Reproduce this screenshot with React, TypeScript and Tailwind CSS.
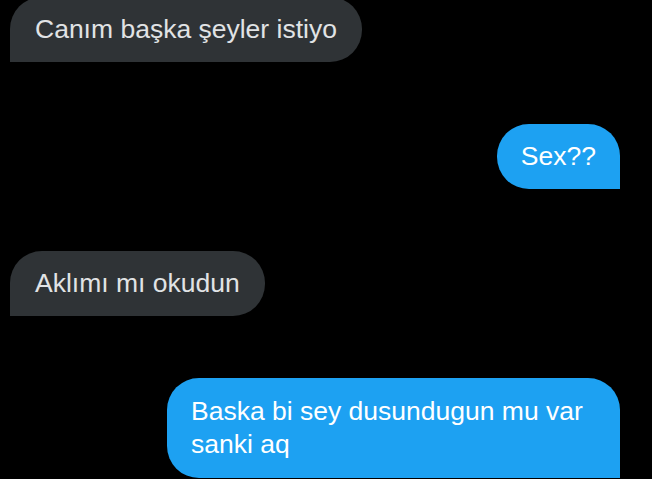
const messages = [
  { text: "Canım başka şeyler istiyo", mine: false },
  { text: "Sex??", mine: true },
  { text: "Aklımı mı okudun", mine: false },
  { text: "Baska bi sey dusundugun mu var sanki aq", mine: true, tall: true },
];

function Bubble({ text, mine, tall }: { text: string; mine: boolean; tall?: boolean }) {
  const pad = tall ? "py-[17px]" : "py-[16px]";
  return (
    <div
      className={
        mine
          ? `self-end max-w-[453px] rounded-[32px] rounded-br-none bg-[#1da1f2] px-[24px] ${pad} text-white`
          : `self-start max-w-[453px] rounded-[32px] rounded-bl-none bg-[#2f3336] px-[25px] ${pad} text-[#e1e3e5]`
      }
    >
      <p className="text-[26.5px] leading-[33px]">{text}</p>
    </div>
  );
}

export default function App() {
  return (
    <div
      className="h-[479px] w-[652px] overflow-hidden bg-black"
      style={{ fontFamily: '"Liberation Sans", Arial, sans-serif' }}
    >
      <div className="mt-[-3px] flex flex-col gap-[62px] pl-[10px] pr-[32px]">
        {messages.map((m, i) => (
          <Bubble key={i} text={m.text} mine={m.mine} tall={m.tall} />
        ))}
      </div>
    </div>
  );
}
